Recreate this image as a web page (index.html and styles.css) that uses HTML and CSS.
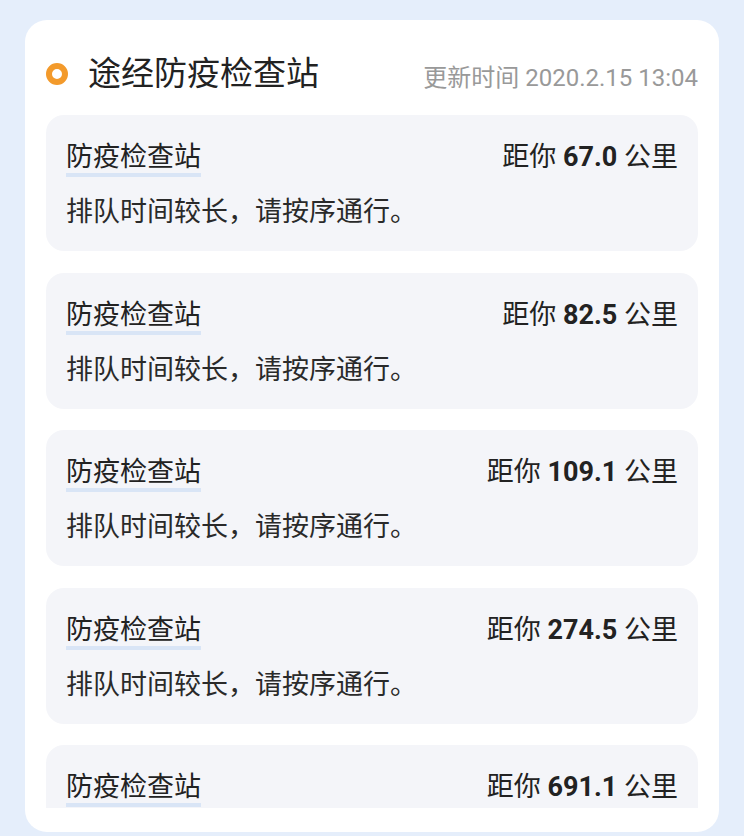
FILE: index.html
```html
<!DOCTYPE html>
<html lang="zh-CN">
<head>
  <meta charset="UTF-8" />
  <meta name="viewport" content="width=device-width, initial-scale=1.0" />
  <title>途经防疫检查站</title>
  <link rel="stylesheet" href="styles.css">
</head>
<body>

  <!-- Checkpoint panel -->
  <section class="panel">
    <header class="panel-head">
      <h1 class="panel-title"><span class="ring"></span>途经防疫检查站</h1>
      <span class="updated">更新时间 2020.2.15 13:04</span>
    </header>

    <div class="station-list">
      <article class="station">
        <div class="station-top">
          <span class="station-name">防疫检查站</span>
          <span class="distance">距你 <b>67.0</b> 公里</span>
        </div>
        <p class="station-note">排队时间较长，请按序通行。</p>
      </article>
      <article class="station">
        <div class="station-top">
          <span class="station-name">防疫检查站</span>
          <span class="distance">距你 <b>82.5</b> 公里</span>
        </div>
        <p class="station-note">排队时间较长，请按序通行。</p>
      </article>
      <article class="station">
        <div class="station-top">
          <span class="station-name">防疫检查站</span>
          <span class="distance">距你 <b>109.1</b> 公里</span>
        </div>
        <p class="station-note">排队时间较长，请按序通行。</p>
      </article>
      <article class="station">
        <div class="station-top">
          <span class="station-name">防疫检查站</span>
          <span class="distance">距你 <b>274.5</b> 公里</span>
        </div>
        <p class="station-note">排队时间较长，请按序通行。</p>
      </article>
      <!-- last one is scrolled off below the fold -->
      <article class="station">
        <div class="station-top">
          <span class="station-name">防疫检查站</span>
          <span class="distance">距你 <b>691.1</b> 公里</span>
        </div>
      </article>
    </div>
  </section>

</body>
</html>
```

FILE: styles.css
```css
body {
  font-family: Roboto, "Noto Sans CJK SC", sans-serif;
  background: #e5eefb;
  color: #222;
  margin: 0;
  padding: 20px 25px 0;
  height: 836px;
  box-sizing: border-box;
  overflow: hidden;
}

.panel {
  background: #fff;
  border-radius: 22px;
  padding: 0 21px 24px;
}

.panel-head {
  display: flex;
  align-items: center;
  justify-content: space-between;
  padding: 36px 0 23px;
  height: 36px;
}

.panel-title {
  display: flex;
  align-items: center;
  margin: 0;
  font-size: 33px;
  font-weight: 400;
  line-height: 36px;
  color: #222;
}

.ring {
  width: 10px;
  height: 10px;
  border: 6px solid #f39a2b;
  border-radius: 50%;
  margin-right: 20px;
}

.updated {
  font-size: 24px;
  color: #999;
  line-height: 36px;
  margin-top: 8px;
}

.station-list {
  display: flex;
  flex-direction: column;
  gap: 21.5px;
  height: 693px;
  overflow: hidden;
}

.station {
  flex: none;
  height: 136px;
  box-sizing: border-box;
  background: #f4f5f9;
  border-radius: 18px;
  padding: 27px 20px 0;
}

.station-top {
  display: flex;
  justify-content: space-between;
  align-items: flex-start;
  height: 36px;
}

.station-name {
  font-size: 27px;
  line-height: 31px;
  border-bottom: 4px solid #d9e5f6;
}

.distance {
  font-size: 27px;
  line-height: 31px;
}

.distance b {
  font-weight: 700;
}

.station-note {
  margin: 16px 0 0;
  font-size: 27px;
  line-height: 36px;
  color: #2a2a2a;
}
```
